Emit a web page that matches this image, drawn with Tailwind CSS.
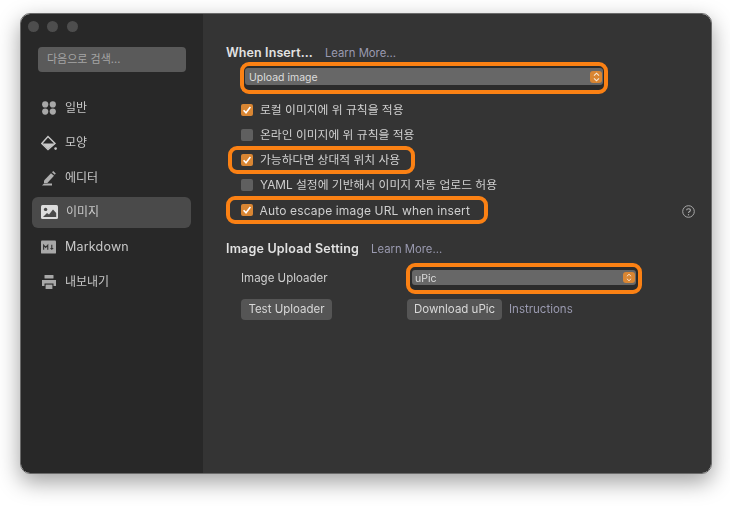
<!DOCTYPE html>
<html lang="ko">
<head>
  <meta charset="UTF-8">
  <title>Preferences</title>
  <script src="https://cdn.jsdelivr.net/npm/@tailwindcss/browser@4"></script>
</head>
<body class="bg-white w-[730px] h-[506px] overflow-hidden font-['Inter','Noto_Sans_CJK_KR',sans-serif]">
  <div class="pl-[20px] pt-[13px] blur-[0.35px]">
    <!-- window -->
    <div class="w-[692px] h-[461px] flex rounded-[10px] overflow-hidden border border-[#6a6a6a] shadow-[0_8px_22px_rgba(0,0,0,0.38)]">
      <!-- sidebar -->
      <aside class="w-[182px] shrink-0 bg-[#282828] flex flex-col">
        <div class="flex gap-[8.3px] pl-[7px] pt-[7px]">
          <span class="w-[11px] h-[11px] rounded-full bg-[#4d4d4d]"></span>
          <span class="w-[11px] h-[11px] rounded-full bg-[#4d4d4d]"></span>
          <span class="w-[11px] h-[11px] rounded-full bg-[#4d4d4d]"></span>
        </div>
        <div class="ml-[17px] mt-[15px] w-[148px] h-[25px] rounded-[4px] bg-[#5a5a5a] flex items-center pl-[9px] text-[11px] text-[#a5a5a5]">다음으로 검색...</div>
        <nav class="mt-[20.5px] ml-[11px] w-[159px] flex flex-col gap-[3.8px] text-[12px] text-[#c8c8c8]">
          <div class="h-[31px] flex items-center pl-[9px] gap-[8px]">
            <svg class="w-[16px] h-[16px]" viewBox="0 0 16 16" fill="#a8a8a8"><circle cx="4.2" cy="4.4" r="3.1"/><circle cx="11.8" cy="4.4" r="3.1"/><circle cx="4.2" cy="11.6" r="3.1"/><circle cx="11.8" cy="11.6" r="3.1"/></svg>
            <span>일반</span>
          </div>
          <div class="h-[31px] flex items-center pl-[9px] gap-[8px]">
            <svg class="w-[16px] h-[16px]" viewBox="0 0 16 16"><path d="M7 1.5 L14 8.5 L7 14.5 L0.8 8.5 Z" fill="none" stroke="#c8c8c8" stroke-width="1.4"/><path d="M1.5 8.5 H13.5 L7 14 Z" fill="#c8c8c8"/><circle cx="14.6" cy="13.6" r="1.3" fill="#c8c8c8"/></svg>
            <span>모양</span>
          </div>
          <div class="h-[31px] flex items-center pl-[9px] gap-[8px]">
            <svg class="w-[16px] h-[16px]" viewBox="0 0 16 16" fill="#b0b0b0"><path d="M3 10.5 L10 3.2 L13 5.8 L6.4 13 H3 Z"/><path d="M11 2.2 L12.2 1 L14.8 3.4 L13.8 4.8 Z"/><path d="M1 15.4 L3 13.6 H11 V15.4 Z"/></svg>
            <span>에디터</span>
          </div>
          <div class="h-[31px] flex items-center pl-[9px] gap-[8px] rounded-[6px] bg-[#4a4a4a]">
            <svg class="w-[17px] h-[14px]" viewBox="0 0 17 14"><rect width="17" height="14" rx="1.5" fill="#dcdcdc"/><circle cx="4.6" cy="4.4" r="1.7" fill="#4a4a4a"/><path d="M2 12 L6 8 L8 9.5 L12 4.5 L15.2 8 V12 Z" fill="#4a4a4a"/></svg>
            <span>이미지</span>
          </div>
          <div class="h-[31px] flex items-center pl-[9px] gap-[9px]">
            <svg class="w-[15px] h-[14px]" viewBox="0 0 16 14"><rect width="16" height="14" rx="1" fill="#a8a8a8"/><path d="M2.8 10 V5 L5 7.5 L7.2 5 V10" fill="none" stroke="#333" stroke-width="1.2"/><path d="M11.5 4.5 V8.5" stroke="#333" stroke-width="1.2"/><path d="M9.5 8 H13.5 L11.5 10.3 Z" fill="#333"/></svg>
            <span class="text-[12.5px] tracking-[0.2px]">Markdown</span>
          </div>
          <div class="h-[31px] flex items-center pl-[9px] gap-[8px]">
            <svg class="w-[16px] h-[16px]" viewBox="0 0 16 16" fill="#a8a8a8"><rect x="3.5" y="1" width="9" height="3.6" rx="0.6"/><path d="M1 6 H15 V12 H12.5 V9.5 H3.5 V12 H1 Z"/><rect x="4.6" y="10.6" width="6.8" height="4.4"/></svg>
            <span>내보내기</span>
          </div>
        </nav>
      </aside>
      <!-- main -->
      <main class="flex-1 bg-[#343434] pl-[23px] pt-[30px] text-[11.8px] text-[#cfcfcf] relative">
        <div class="flex items-baseline gap-[12px] h-[17px]">
          <h2 class="font-semibold text-[12.5px] tracking-[0.1px] text-[#e2e2e2]">When Insert...</h2>
          <a class="text-[11.3px] text-[#9a9ab0]">Learn More...</a>
        </div>
        <div class="ml-[14px] mt-[1px] w-[368px] h-[32px] rounded-[9px] border-4 border-[#fb8114] bg-[#2b2b2b] px-[1px] pt-[2px]">
          <div class="h-[17px] rounded-[3px] bg-[#676767] flex items-center justify-between pl-[4px] pr-[1px] text-[10.5px] text-[#dddddd]">
            <span class="pt-[2px]">Upload image</span>
            <span class="w-[12px] h-[12px] rounded-[3px] bg-[#d98633] flex items-center justify-center">
              <svg class="w-[7px] h-[10px]" viewBox="0 0 7 10" fill="none" stroke="#f5e8d8" stroke-width="1.1"><path d="M1 3.6 L3.5 1.2 L6 3.6"/><path d="M1 6.4 L3.5 8.8 L6 6.4"/></svg>
            </span>
          </div>
        </div>
        <div class="mt-[6px] ml-[15px] flex flex-col items-start gap-[5px]">
          <label class="h-[20px] flex items-center gap-[7px]">
            <span class="w-[12px] h-[12px] rounded-[2px] bg-[#d98633] flex items-center justify-center"><svg class="w-[10px] h-[10px]" viewBox="0 0 10 10" fill="none" stroke="#fff" stroke-width="1.6"><path d="M1.6 5.2 L4 7.8 L8.4 2"/></svg></span>
            <span class="pt-[2px]">로컬 이미지에 위 규칙을 적용</span>
          </label>
          <label class="h-[20px] flex items-center gap-[7px]">
            <span class="w-[12px] h-[12px] rounded-[2px] bg-[#5f5f5f]"></span>
            <span class="pt-[2px]">온라인 이미지에 위 규칙을 적용</span>
          </label>
          <label class="h-[20px] flex items-center gap-[7px] pr-[11px] -ml-[9px] pl-[9px] rounded-[5px] outline-4 outline-[#fb8114]">
            <span class="w-[12px] h-[12px] rounded-[2px] bg-[#d98633] flex items-center justify-center"><svg class="w-[10px] h-[10px]" viewBox="0 0 10 10" fill="none" stroke="#fff" stroke-width="1.6"><path d="M1.6 5.2 L4 7.8 L8.4 2"/></svg></span>
            <span class="pt-[2px]">가능하다면 상대적 위치 사용</span>
          </label>
          <label class="h-[20px] flex items-center gap-[7px]">
            <span class="w-[12px] h-[12px] rounded-[2px] bg-[#5f5f5f]"></span>
            <span class="pt-[2px]">YAML 설정에 기반해서 이미지 자동 업로드 허용</span>
          </label>
          <label class="h-[20px] flex items-center gap-[7px] pr-[14px] -ml-[11px] pl-[11px] w-[254px] rounded-[5px] outline-4 outline-[#fb8114]">
            <span class="w-[12px] h-[12px] rounded-[2px] bg-[#d98633] flex items-center justify-center"><svg class="w-[10px] h-[10px]" viewBox="0 0 10 10" fill="none" stroke="#fff" stroke-width="1.6"><path d="M1.6 5.2 L4 7.8 L8.4 2"/></svg></span>
            <span class="pt-[2px] text-[12px] tracking-[0.15px] whitespace-nowrap">Auto escape image URL when insert</span>
          </label>
        </div>
        <!-- help button, sits over the row -->
        <svg class="absolute left-[479px] top-[191px] w-[13px] h-[13px]" viewBox="0 0 13 13" fill="none" stroke="#a8a8a8"><circle cx="6.5" cy="6.5" r="5.8" stroke-width="1"/><path d="M4.6 5.2 C4.6 3.2 8.4 3.2 8.4 5.2 C8.4 6.6 6.5 6.4 6.5 8" stroke-width="1.1"/><circle cx="6.5" cy="9.8" r="0.7" fill="#a8a8a8" stroke="none"/></svg>
        <div class="flex items-baseline gap-[12px] mt-[20px] h-[17px]">
          <h2 class="font-semibold text-[12.5px] tracking-[0.2px] text-[#e2e2e2]">Image Upload Setting</h2>
          <a class="text-[11.3px] text-[#9a9ab0]">Learn More...</a>
        </div>
        <div class="ml-[15px] mt-[6px] flex items-center h-[31px]">
          <span class="w-[165px] text-[11.5px]">Image Uploader</span>
          <div class="w-[236px] h-[31px] rounded-[9px] border-4 border-[#fb8114] bg-[#2b2b2b] px-[2px] pt-[3px]">
            <div class="h-[15px] rounded-[3px] bg-[#676767] flex items-center justify-between pl-[3px] pr-[1px] text-[10.5px] text-[#dddddd]">
              <span class="pt-[2px]">uPic</span>
              <span class="w-[12px] h-[11px] rounded-[3px] bg-[#d98633] flex items-center justify-center">
                <svg class="w-[6px] h-[9px]" viewBox="0 0 7 10" fill="none" stroke="#f5e8d8" stroke-width="1.1"><path d="M1 3.6 L3.5 1.2 L6 3.6"/><path d="M1 6.4 L3.5 8.8 L6 6.4"/></svg>
              </span>
            </div>
          </div>
        </div>
        <div class="ml-[15px] mt-[5px] flex items-center h-[21px]">
          <div class="w-[166px]"><button class="h-[21px] w-[91px] rounded-[4px] bg-[#555555] text-[11.5px] text-[#d8d8d8]">Test Uploader</button></div>
          <button class="h-[21px] w-[95px] rounded-[4px] bg-[#555555] text-[11.5px] text-[#d8d8d8]">Download uPic</button>
          <a class="ml-[7px] text-[11.5px] text-[#9a9ab0]">Instructions</a>
        </div>
      </main>
    </div>
  </div>
</body>
</html>
